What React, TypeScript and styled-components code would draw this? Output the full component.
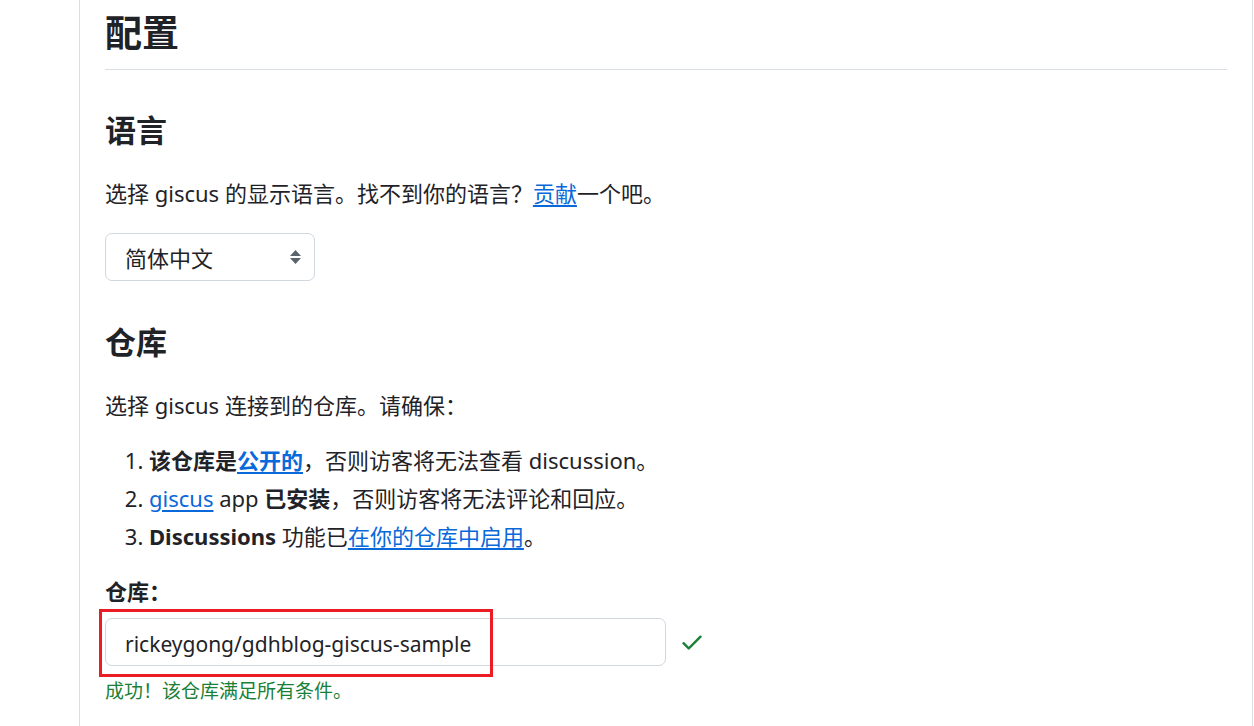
import React from "react";
import styled, { createGlobalStyle } from "styled-components";

const GlobalStyle = createGlobalStyle`
  html, body {
    margin: 0;
    padding: 0;
    background: #ffffff;
  }
  body {
    font-family: "Noto Sans", "Noto Sans CJK SC", sans-serif;
    color: #1f2328;
    font-size: 22px;
  }
`;

const Page = styled.div`
  display: flex;
  min-height: 726px;
  overflow: hidden;
`;

const Gutter = styled.div`
  width: 79px;
  flex-shrink: 0;
`;

const Main = styled.main`
  width: 1174px;
  flex-shrink: 0;
  border-left: 1px solid #d8dee4;
  border-right: 1px solid #d8dee4;
  padding: 10px 25px 0;
  box-sizing: border-box;
  min-height: 726px;
`;

const Title = styled.h1`
  margin: 0;
  font-size: 37px;
  line-height: 46px;
  font-weight: 700;
  padding-bottom: 13px;
  border-bottom: 1px solid #d8dee4;
`;

const SectionTitle = styled.h2<{ $top: number }>`
  margin: ${(p) => p.$top}px 0 29px;
  font-size: 31px;
  line-height: 38px;
  font-weight: 700;
`;

const Text = styled.p`
  margin: 0;
  font-size: 22px;
  line-height: 30px;
`;

const Link = styled.a`
  color: #0969da;
  text-decoration: underline;
  text-underline-offset: 3px;
  cursor: pointer;
`;

const SelectBox = styled.div`
  margin-top: 25px;
  width: 210px;
  height: 48px;
  box-sizing: border-box;
  border: 1px solid #d0d7de;
  border-radius: 7px;
  display: flex;
  align-items: center;
  justify-content: space-between;
  padding: 0 13px 0 19px;
  font-size: 22px;
  background: #ffffff;
`;

const Steps = styled.ol`
  margin: 21px 0 0;
  padding-left: 44px;
`;

const Step = styled.li`
  font-size: 22px;
  line-height: 38px;
`;

const Strong = styled.b`
  font-weight: 700;
`;

const Label = styled.div`
  margin-top: 21px;
  font-size: 22px;
  line-height: 30px;
  font-weight: 700;
`;

const FieldRow = styled.div`
  margin-top: 12px;
  display: flex;
  align-items: center;
  gap: 13px;
`;

const FieldWrap = styled.div`
  position: relative;
`;

const Input = styled.div`
  width: 561px;
  height: 48px;
  box-sizing: border-box;
  border: 1px solid #d0d7de;
  border-radius: 7px;
  display: flex;
  align-items: center;
  padding: 4px 0 0 19px;
  font-size: 21px;
`;

const Highlight = styled.div`
  position: absolute;
  left: -6px;
  top: -9px;
  width: 394px;
  height: 68px;
  box-sizing: border-box;
  border: 3px solid #ec1c24;
  pointer-events: none;
`;

const Success = styled.div`
  margin-top: 12px;
  font-size: 19px;
  line-height: 26px;
  color: #1a7f37;
`;

const SortIcon = () => (
  <svg width="11" height="14" viewBox="0 0 11 14">
    <path d="M5.5 0 L11 6 H0 Z" fill="#59636e" />
    <path d="M5.5 14 L11 8 H0 Z" fill="#59636e" />
  </svg>
);

const CheckIcon = () => (
  <svg width="26" height="26" viewBox="0 0 16 16" fill="#1a7f37">
    <path d="M13.78 4.22a.75.75 0 0 1 0 1.06l-7.25 7.25a.75.75 0 0 1-1.06 0L2.22 9.28a.751.751 0 0 1 .018-1.042.751.751 0 0 1 1.042-.018L6 10.94l6.72-6.72a.75.75 0 0 1 1.06 0Z" />
  </svg>
);

export default function App() {
  return (
    <>
      <GlobalStyle />
      <Page>
        <Gutter />
        <Main>
          <Title>配置</Title>

          <SectionTitle $top={41}>语言</SectionTitle>
          <Text>
            选择 giscus 的显示语言。找不到你的语言？<Link>贡献</Link>一个吧。
          </Text>
          <SelectBox>
            <span>简体中文</span>
            <SortIcon />
          </SelectBox>

          <SectionTitle $top={42}>仓库</SectionTitle>
          <Text>选择 giscus 连接到的仓库。请确保：</Text>
          <Steps>
            <Step>
              <Strong>
                该仓库是<Link>公开的</Link>
              </Strong>
              ，否则访客将无法查看 discussion。
            </Step>
            <Step>
              <Link>giscus</Link> app <Strong>已安装</Strong>
              ，否则访客将无法评论和回应。
            </Step>
            <Step>
              <Strong>Discussions</Strong> 功能已<Link>在你的仓库中启用</Link>。
            </Step>
          </Steps>

          <Label>仓库：</Label>
          <FieldRow>
            <FieldWrap>
              <Input>rickeygong/gdhblog-giscus-sample</Input>
              <Highlight />
            </FieldWrap>
            <CheckIcon />
          </FieldRow>
          <Success>成功！该仓库满足所有条件。</Success>
        </Main>
      </Page>
    </>
  );
}
